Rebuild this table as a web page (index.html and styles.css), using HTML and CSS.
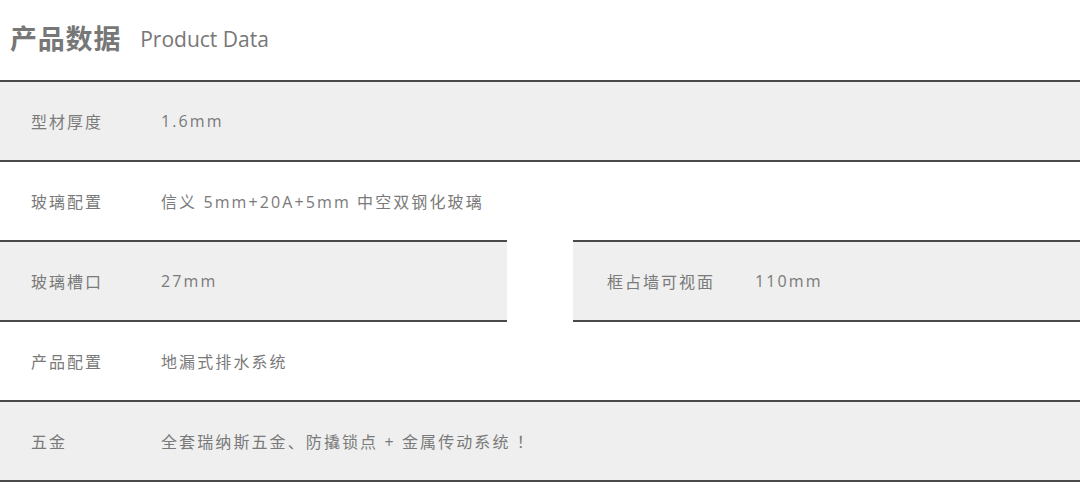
FILE: index.html
```html
<!DOCTYPE html>
<html lang="zh-CN">
<head>
<meta charset="utf-8">
<title>产品数据</title>
<link rel="stylesheet" href="styles.css">
</head>
<body>
<div class="page">
  <header class="head">
    <h1 class="title">产品数据</h1>
    <span class="subtitle">Product Data</span>
  </header>
  <div class="table">
    <div class="row gray">
      <span class="label">型材厚度</span><span class="value">1.6mm</span>
    </div>
    <div class="row">
      <span class="label">玻璃配置</span><span class="value">信义 5mm+20A+5mm 中空双钢化玻璃</span>
    </div>
    <div class="split">
      <div class="row gray half">
        <span class="label">玻璃槽口</span><span class="value">27mm</span>
      </div>
      <div class="row gray half right">
        <span class="label">框占墙可视面</span><span class="value">110mm</span>
      </div>
    </div>
    <div class="row after-split">
      <span class="label">产品配置</span><span class="value">地漏式排水系统</span>
    </div>
    <div class="row gray last">
      <span class="label">五金</span><span class="value">全套瑞纳斯五金、防撬锁点 + 金属传动系统 ！</span>
    </div>
  </div>
</div>
</body>
</html>
```

FILE: styles.css
```css
* { box-sizing: border-box; }
html, body { margin: 0; padding: 0; background: #fff; }
body {
  font-family: "Open Sans", "Noto Sans CJK SC", sans-serif;
  color: #777;
  width: 1080px;
}
.head {
  height: 80px;
  display: flex;
  align-items: center;
  padding-left: 10px;
  padding-bottom: 6px;
}
.title {
  margin: 0;
  font-family: "Noto Sans CJK SC", sans-serif;
  font-weight: 700;
  font-size: 27px;
  color: #777;
  letter-spacing: 0.8px;
}
.subtitle {
  margin-left: 19px;
  font-size: 21px;
  color: #777;
  padding-top: 3px;
}
.table { display: flex; flex-direction: column; }
.row {
  height: 80px;
  border-top: 2px solid #4a4a4a;
  display: flex;
  align-items: center;
  padding-left: 31px;
  font-size: 16px;
  color: #7a7a7a;
}
.row.gray { background: #eeefee; }
.row.last { border-bottom: 2px solid #4a4a4a; height: 82px; }
.label {
  width: 130px;
  font-family: "Noto Sans CJK SC", sans-serif;
  letter-spacing: 2px;
}
.value {
  font-family: "Open Sans", "Noto Sans CJK SC", sans-serif;
  letter-spacing: 2.1px;
}
.split {
  display: flex;
  gap: 66px;
}
.row.half {
  width: 507px;
  height: 82px;
  border-bottom: 2px solid #4a4a4a;
}
.row.half.right { padding-left: 34px; }
.row.half.right .label { width: 148px; }
.row.after-split {
  border-top: none;
  height: 78px;
}
```
